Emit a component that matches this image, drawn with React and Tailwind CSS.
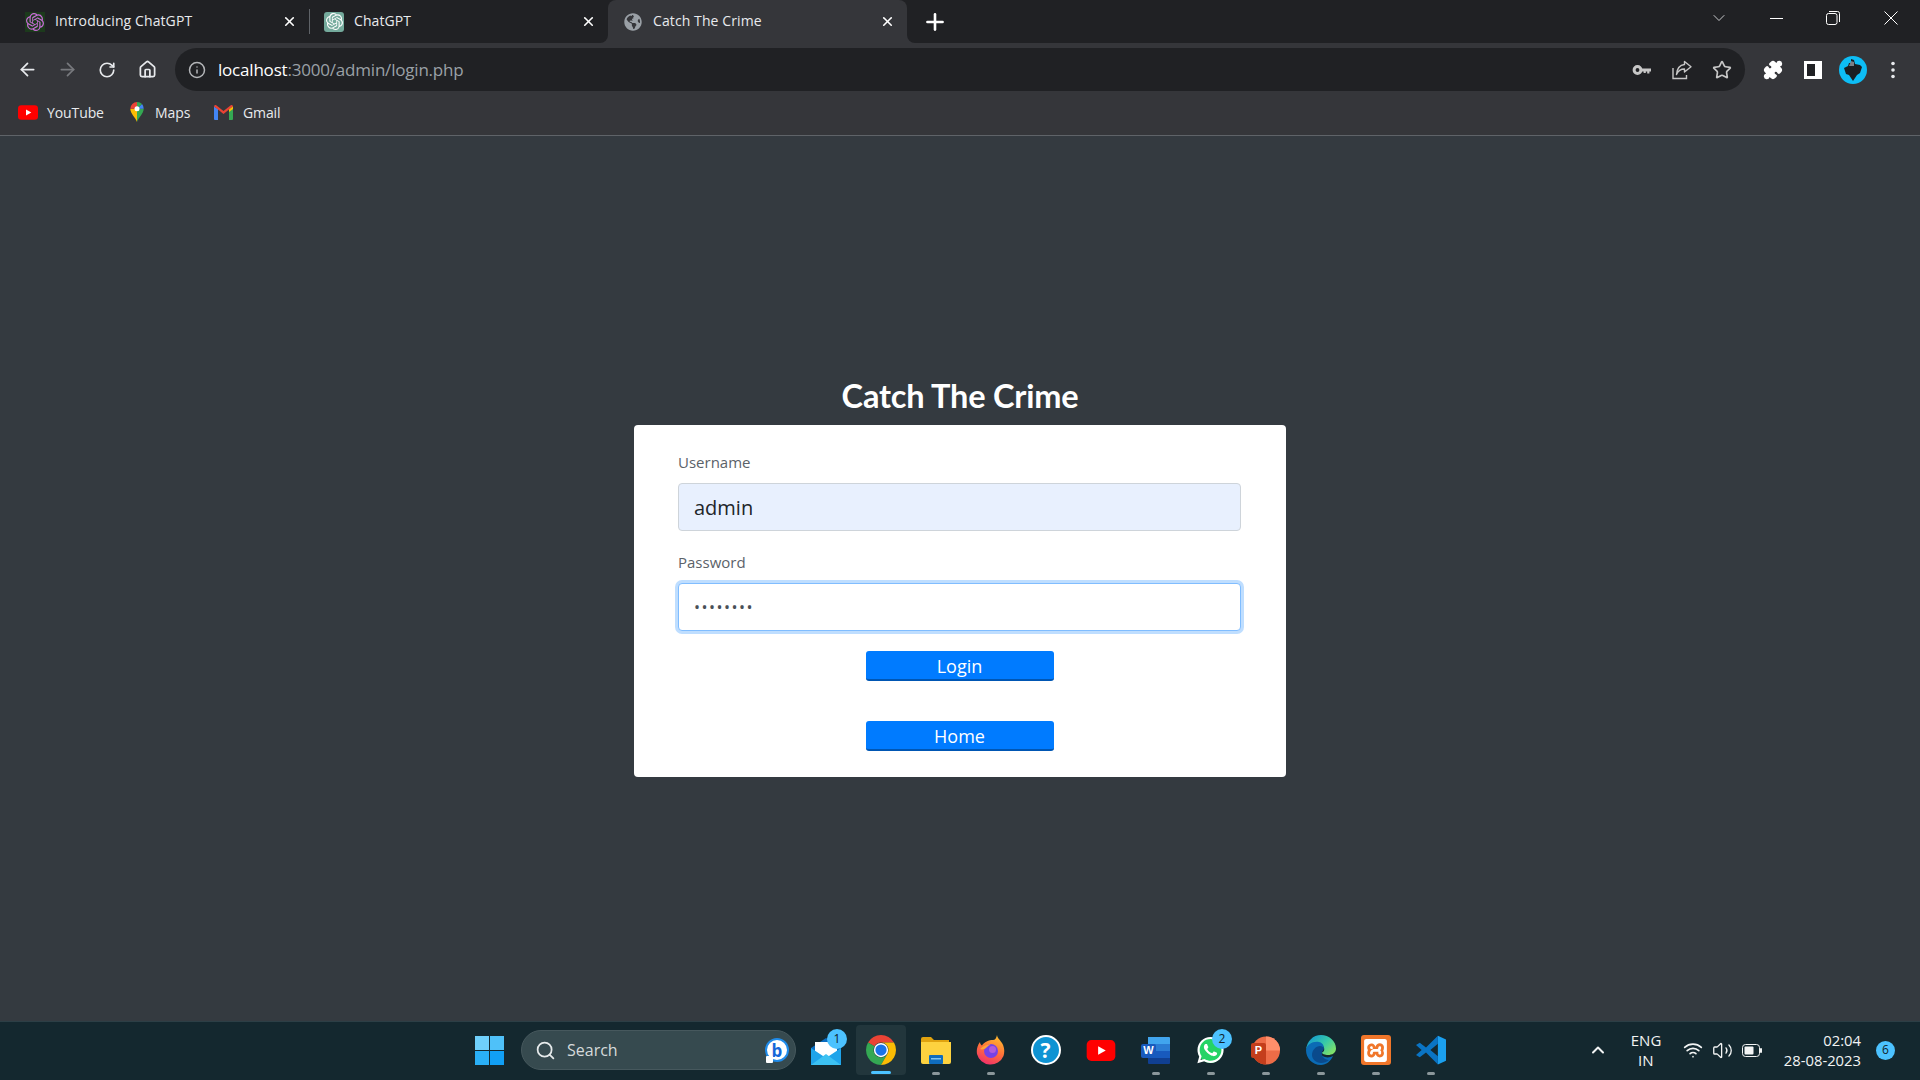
import React from 'react';
import { ArrowLeft, ArrowRight, RotateCw, Home, Info, Star, X, Plus, ChevronDown, ChevronUp, Search, Wifi, Volume2, Puzzle } from 'lucide-react';
import { SiOpenai, SiXampp } from 'react-icons/si';
import { FaGlobeAmericas, FaWhatsapp } from 'react-icons/fa';

const Tab = ({ className, icon, label, active }) => (
  <div className={`relative flex h-[43px] items-center ${className} ${active ? 'rounded-t-lg bg-[#35363a]' : ''}`}>
    {icon}
    <span className="mb-[2px] flex-1 text-[14px] tracking-[0.1px] text-[#e8eaed]">{label}</span>
    <X size={15} strokeWidth={2.6} color="#ffffff" className="mr-[12px]" />
    {active && (
      <>
        <div className="absolute bottom-0 left-[-8px] h-2 w-2 bg-[#35363a]"><div className="h-full w-full rounded-br-lg bg-[#202124]" /></div>
        <div className="absolute bottom-0 right-[-8px] h-2 w-2 bg-[#35363a]"><div className="h-full w-full rounded-bl-lg bg-[#202124]" /></div>
      </>
    )}
  </div>
);

const NavBtn = ({ children }) => <div className="flex h-[40px] w-[40px] items-center justify-center">{children}</div>;

const KeyIcon = () => (
  <svg width="20" height="20" viewBox="0 0 20 20"><circle cx="5.500" cy="10" r="3.400" fill="none" stroke="#c7c7c7" strokeWidth="3" /><path d="M8.500 8.400H19v3h-1.600v2h-2.200v-2h-1.400v1.500h-2.200v-1.500H8.500z" fill="#c7c7c7" /></svg>
);
const ShareIcon = () => (
  <svg width="20" height="20" viewBox="0 0 20 20" fill="none" stroke="#c7c7c7" strokeWidth="1.400"><path d="M1 8v10.500h13.500v-3.500" /><path d="M12.500 1.500 19 6.800l-6.500 5.200V9C8 9 6 11 4.500 14.500 5 8.500 8 5 12.500 4.500z" strokeLinejoin="round" /></svg>
);
const PanelIcon = () => (
  <svg width="18" height="18" viewBox="0 0 18 18"><rect width="18" height="18" fill="#ffffff" /><rect x="3" y="3" width="8" height="12" fill="#202124" /></svg>
);
const Avatar = () => (
  <svg width="28" height="28" viewBox="0 0 28 28"><circle cx="14" cy="14" r="14" fill="#0dbdf5" /><path d="M12 3l3 1 1 4 5 1 2 2-2 6-3 2-4 6-4-6-3-1-2-6 4-2 1-3 2 0z" fill="#1a1d20" /><path d="M12 5l3 1v4h-5z" fill="#7a7f85" /></svg>
);
const Dots = () => (
  <svg width="6" height="18" viewBox="0 0 6 18" fill="#e8eaed"><circle cx="3" cy="2.500" r="1.800" /><circle cx="3" cy="9" r="1.800" /><circle cx="3" cy="15.500" r="1.800" /></svg>
);

const YtIcon = ({ w = 20, h = 15 }) => (
  <svg width={w} height={h} viewBox="0 0 30 22"><rect width="30" height="22" rx="5" fill="#ff0000" /><path d="M12 6.500v9l8-4.500z" fill="#ffffff" /></svg>
);
const MapsIcon = () => (
  <svg width="14" height="20" viewBox="0 0 16 24"><path d="M8 24C6 18 0 14 0 8h8z" fill="#fbbc04" /><path d="M8 24c2-6 8-10 8-16H8z" fill="#34a853" /><path d="M14 2.500A8 8 0 0 1 16 8H8z" fill="#4285f4" /><path d="M8 0a8 8 0 0 1 6 2.500L8 8z" fill="#34a853" /><path d="M8 0a8 8 0 0 0-8 8h8z" fill="#ea4335" /><circle cx="8" cy="8" r="3" fill="#ffffff" /></svg>
);
const GmailIcon = () => (
  <svg width="19" height="15" viewBox="0 0 19 15"><path d="M0 1.500 4 4v11H1a1 1 0 0 1-1-1z" fill="#4285f4" /><path d="M19 1.500 15 4v11h3a1 1 0 0 0 1-1z" fill="#34a853" /><path d="M0 1.500C0 .3 1.300-.4 2.200.2L9.500 6 16.800.2c.9-.6 2.200.1 2.200 1.300L15 4.500 9.500 9 4 4.500z" fill="#ea4335" /><path d="M15 4.500 19 1.500V4l-4 3z" fill="#fbbc04" /></svg>
);

const WinLogo = () => (
  <div className="grid h-[29px] w-[29px] grid-cols-2 gap-[1px]">
    <div className="bg-[#6fd0fb]" /><div className="bg-[#4fc1f9]" /><div className="bg-[#2ab0f7]" /><div className="bg-[#119ff5]" />
  </div>
);
const BingIcon = () => (
  <div className="relative flex h-[24px] w-[24px] items-center justify-center rounded-full border-2 border-[#1f8be8] bg-white">
    <span className="text-[17px] font-bold leading-none text-[#1467d9]">b</span>
    <div className="absolute bottom-[-3px] left-[-1px] h-[7px] w-[7px] rounded-[1px] bg-white" />
  </div>
);
const MailIcon = () => (
  <svg width="30" height="30" viewBox="0 0 30 30"><path d="M0 13 15 3l15 10v16H0z" fill="#0a6cc0" /><path d="M4 7h22v13L15 26 4 20z" fill="#ffffff" /><path d="M0 13l15 10 15-10v17H0z" fill="#1fa4ea" /><path d="M0 30 15 19l15 11z" fill="#3cc1f2" /></svg>
);
const ChromeIcon = () => (
  <svg width="30" height="30" viewBox="4 4 40 40">
    <path d="M41.320 14A20 20 0 0 0 6.680 14l8.660 5A10 10 0 0 1 24 14z" fill="#ea4335" />
    <path d="M6.680 14A20 20 0 0 0 24 44l8.660-15A10 10 0 0 1 15.340 19z" fill="#34a853" />
    <path d="M41.320 14A20 20 0 0 1 24 44l8.660-15A10 10 0 0 0 24 14z" fill="#fbbc04" />
    <circle cx="24" cy="24" r="9.500" fill="#ffffff" /><circle cx="24" cy="24" r="7.500" fill="#1a73e8" />
  </svg>
);
const FolderIcon = () => (
  <svg width="30" height="28" viewBox="0 0 30 28"><path d="M0 3a2 2 0 0 1 2-2h8l3 3h15v6H0z" fill="#e0a30f" /><path d="M0 6h30v20a2 2 0 0 1-2 2H2a2 2 0 0 1-2-2z" fill="#fdd23f" /><rect x="8" y="19" width="14" height="9" rx="1" fill="#0f6cbd" /><rect x="10" y="22" width="10" height="1.500" fill="#7fc3f2" /></svg>
);
const FirefoxIcon = () => (
  <svg width="30" height="30" viewBox="0 0 30 30">
    <defs><linearGradient id="ff" x1="0.700" y1="0" x2="0.300" y2="1"><stop offset="0" stopColor="#ffbd2e" /><stop offset="0.500" stopColor="#ff7139" /><stop offset="1" stopColor="#f02e6b" /></linearGradient></defs>
    <path d="M21 0c.3 3 2.500 4 5 8 3 5 2.500 10 1.500 13A14 14 0 0 1 1 19C.4 15 1 11 4 7c0 2 1 3 2 3.500C8 7 13 5 17 5c2 0 3.500-2 4-5z" fill="url(#ff)" />
    <circle cx="15" cy="16" r="7" fill="#7542e5" /><circle cx="16.500" cy="14.500" r="3.500" fill="#b05bdb" />
    <path d="M4 14c3-3 6-4 11-5 0 0-3 2-5 4-1 1-4 2-6 1z" fill="#ffa436" />
  </svg>
);
const HelpIcon = () => (
  <div className="flex h-[30px] w-[30px] items-center justify-center rounded-full border-2 border-white bg-[#0e93d3] font-['Open_Sans'] text-[21px] font-bold leading-none text-white">?</div>
);
const WordIcon = () => (
  <div className="relative h-[27px] w-[29px]">
    <svg width="29" height="27" viewBox="0 0 29 27"><path d="M7 0h21a1 1 0 0 1 1 1v6H7z" fill="#41a5ee" /><rect x="7" y="7" width="22" height="7" fill="#2b7cd3" /><rect x="7" y="14" width="22" height="7" fill="#185abd" /><path d="M7 21h22v5a1 1 0 0 1-1 1H8a1 1 0 0 1-1-1z" fill="#103f91" /></svg>
    <div className="absolute left-0 top-[7px] flex h-[14px] w-[15px] items-center justify-center rounded-[2px] bg-[#185abd] font-['Liberation_Sans'] text-[11px] font-bold leading-none text-white">W</div>
  </div>
);
const WaIcon = () => (
  <div className="relative flex h-[29px] w-[29px] items-center justify-center">
    <div className="absolute inset-[2px] rounded-full bg-[#25d366]" />
    <FaWhatsapp size={30} color="#ffffff" className="relative" />
  </div>
);
const PptIcon = () => (
  <div className="relative h-[29px] w-[29px]">
    <svg width="29" height="29" viewBox="0 0 29 29"><circle cx="15" cy="14.500" r="14" fill="#ed6c47" /><path d="M15 .500A14 14 0 0 1 29 14.500H15z" fill="#ff8f6b" /><path d="M15 28.500A14 14 0 0 1 1 14.500h14z" fill="#c43e1c" /></svg>
    <div className="absolute left-0 top-[7px] flex h-[15px] w-[15px] items-center justify-center rounded-[2px] bg-[#c43e1c] font-['Liberation_Sans'] text-[11px] font-bold leading-none text-white">P</div>
  </div>
);
const EdgeIcon = () => (
  <svg width="30" height="30" viewBox="0 0 30 30">
    <defs>
      <linearGradient id="eg" x1="0" y1="0" x2="1" y2="0.700"><stop offset="0" stopColor="#0c8fdb" /><stop offset="0.600" stopColor="#37c9a8" /><stop offset="1" stopColor="#7fe06a" /></linearGradient>
    </defs>
    <path d="M15 0c8 0 15 6 15 13.500 0 4.500-4 6.500-8 6.500-3 0-6-1-6-2.500 3-1 3-5 0-7.500C10 6 2 9 0 15 1 6 7 0 15 0z" fill="url(#eg)" />
    <path d="M0 15c1-6 7-9 13-8 5 1 6 6 3 9-2 2-1 5 3 6 3 1 6 0 8-1-2 5-7 9-12 9C6 30 0 23 0 15z" fill="#0b6bb5" />
    <path d="M6 20c0-5 4-9 8-9 2 0 4 1.500 4 3-2 2-3 5-1 8 1 2 4 3 6 3-2 2-5 3-8 3-5 0-9-4-9-8z" fill="#0a4a8c" />
  </svg>
);
const XamppIcon = () => (
  <div className="flex h-[30px] w-[30px] items-center justify-center rounded-[3px] bg-[#f0762a]"><SiXampp size={23} color="#ffffff" /></div>
);
const VsIcon = () => (
  <svg width="30" height="30" viewBox="0 0 24 24"><path fill="#1ba0ef" d="M17.500 0.500 24 3.500v17l-6.500 3z" /><path fill="#0a74c4" d="M17.500 0.500 8 10 3 6.200 0 8l4.500 4L0 16l3 1.800L8 14l9.500 9.500V17L11.500 12l6-5z" /></svg>
);

const Badge = ({ n }) => (
  <div className="absolute right-[6px] top-[4px] flex h-[20px] w-[20px] items-center justify-center rounded-full bg-[#4cc2ff] font-['Open_Sans'] text-[12px] leading-none text-[#10222a]">{n}</div>
);

const TaskItem = ({ children, dot, badge, active }) => (
  <div className="relative flex h-[50px] w-[55px] items-center justify-center">
    {active && <div className="absolute inset-y-0 left-[2.500px] right-[2.500px] rounded-[4px] bg-[#22363c]" />}
    <div className="relative flex items-center justify-center">{children}</div>
    {badge && <Badge n={badge} />}
    {dot && <div className="absolute bottom-0 left-1/2 h-[3px] w-[8px] -translate-x-1/2 rounded-full bg-[#8b979b]" />}
    {active && <div className="absolute bottom-[1px] left-1/2 h-[3px] w-[20px] -translate-x-1/2 rounded-full bg-[#4cc2ff]" />}
  </div>
);

export default function App() {
  return (
    <div className="flex h-[1080px] w-[1920px] flex-col overflow-hidden bg-[#343a40] font-['Open_Sans',sans-serif]">
      {/* tab strip */}
      <div className="flex h-[43px] shrink-0 items-center bg-[#202124] pr-[8px]">
        <Tab className="w-[309px] pl-[25px]" label="Introducing ChatGPT" icon={
          <div className="mr-[10px] flex h-[20px] w-[20px] items-center justify-center bg-[#1c3a1c]"><SiOpenai size={18} color="#c86dd7" /></div>
        } />
        <div className="h-[25px] w-px bg-[#5f6368]" />
        <Tab className="w-[298px] pl-[14px]" label="ChatGPT" icon={
          <div className="mr-[10px] flex h-[20px] w-[20px] items-center justify-center rounded-[3px] bg-[#74aa9c]"><SiOpenai size={17} color="#ffffff" /></div>
        } />
        <Tab active className="w-[299px] pl-[16px]" label="Catch The Crime" icon={
          <FaGlobeAmericas size={18} color="#9aa0a6" className="mr-[11px]" />
        } />
        <div className="ml-[20px] flex w-[16px] items-center justify-center"><Plus size={26} strokeWidth={2.400} color="#ffffff" className="shrink-0" /></div>
        <div className="flex-1" />
        <ChevronDown size={20} strokeWidth={1} color="#e8eaed" className="mr-[41px] mb-[7px]" />
        <div className="mr-[43px] mb-[7px] h-px w-[13px] bg-white" />
        <svg width="14" height="14" viewBox="0 0 14 14" fill="none" stroke="#ffffff" className="mr-[44px] mb-[7px]"><rect x="0.500" y="2.500" width="10.500" height="11" rx="2" /><path d="M3 .500h8.500a2 2 0 0 1 2 2V11" /></svg>
        <svg width="14" height="14" viewBox="0 0 14 14" fill="none" stroke="#ffffff" className="mr-[14px] mb-[7px]"><path d="M.500.500l13 13M13.500.500l-13 13" /></svg>
      </div>

      {/* toolbar */}
      <div className="shrink-0 border-b border-[#5f6368] bg-[#35363a] pt-[5px]">
        <div className="flex h-[43px] items-center pl-[7px] pr-[7px]">
          <NavBtn><ArrowLeft size={21} strokeWidth={2} color="#e8eaed" /></NavBtn>
          <NavBtn><ArrowRight size={21} strokeWidth={2} color="#77797d" /></NavBtn>
          <NavBtn><RotateCw size={18} strokeWidth={2.200} color="#e8eaed" /></NavBtn>
          <NavBtn><Home size={19} strokeWidth={2.200} color="#e8eaed" /></NavBtn>
          <div className="ml-[8px] flex h-[43px] w-[1570px] items-center rounded-full bg-[#202124] pl-[13px] pr-[3px]">
            <Info size={18} strokeWidth={2} color="#b4b6b9" />
            <div className="ml-[12px] flex-1 text-[17px] tracking-[-0.2px] text-[#9aa0a6]"><span className="text-white">localhost</span>:3000/admin/login.php</div>
            <NavBtn><KeyIcon /></NavBtn>
            <NavBtn><ShareIcon /></NavBtn>
            <NavBtn><Star size={20} strokeWidth={2} color="#c7c7c7" /></NavBtn>
          </div>
          <div className="ml-[8px] flex">
            <NavBtn><Puzzle size={20} strokeWidth={2} color="#ffffff" fill="#ffffff" /></NavBtn>
            <NavBtn><PanelIcon /></NavBtn>
            <NavBtn><Avatar /></NavBtn>
            <NavBtn><Dots /></NavBtn>
          </div>
        </div>
        <div className="flex h-[44px] items-center pb-[2px] pl-[18px] text-[14px] tracking-[-0.1px] text-[#e8eaed]">
          <YtIcon /><span className="ml-[9px] w-[63px]">YouTube</span>
          <span className="ml-[17px] flex w-[19px] justify-center"><MapsIcon /></span><span className="ml-[9px] w-[38px]">Maps</span>
          <span className="ml-[21px] flex w-[19px]"><GmailIcon /></span><span className="ml-[10px]">Gmail</span>
        </div>
      </div>

      {/* page */}
      <main className="flex flex-1 flex-col items-center pt-[240px]">
        <h1 className="mb-[9px] h-[40px] font-['Lato'] text-[32.500px] font-bold leading-[40px] tracking-[-0.2px] text-white">Catch The Crime</h1>
        <div className="flex w-[652px] flex-col rounded-[4px] bg-white pb-[26px] pl-[44px] pr-[45px] pt-[25px]">
          <label className="mb-[9px] h-[24px] text-[15px] leading-[24px] text-[#5b6269]">Username</label>
          <input readOnly value="admin" className="mb-[19px] h-[48px] rounded-[4px] border border-[#ced4da] bg-[#e8f0fe] px-[15px] text-[20px] text-[#212529] outline-none" />
          <label className="mb-[9px] h-[24px] text-[15px] leading-[24px] text-[#5b6269]">Password</label>
          <input readOnly type="password" value="password" className="h-[48px] rounded-[4px] border border-[#80bdff] bg-white px-[15px] text-[16px] tracking-[1.500px] text-[#495057] shadow-[0_0_0_3px_#bfdeff] outline-none" />
          <button className="ml-[187.500px] mt-[20px] h-[30px] w-[188px] rounded-[3px] border-b-2 border-[#0056b3] bg-[#007bff] pt-[2px] text-[18px] leading-none text-white">Login</button>
          <button className="ml-[187.500px] mt-[40px] h-[30px] w-[188px] rounded-[3px] border-b-2 border-[#0056b3] bg-[#007bff] pt-[2px] text-[18px] leading-none text-white">Home</button>
        </div>
      </main>

      {/* taskbar */}
      <div className="grid h-[59px] shrink-0 grid-cols-[1fr_auto_1fr] items-center border-t border-[#2c3f46] bg-[#14282f] pb-[2px]">
        <div />
        <div className="flex items-center">
          <div className="flex w-[55px] justify-center"><WinLogo /></div>
          <div className="ml-[4px] mr-[2px] flex h-[40px] w-[275px] items-center rounded-full border border-[#46585d] bg-[#364a4f] pl-[13px] pr-[6px]">
            <Search size={21} strokeWidth={2} color="#e6eaeb" />
            <span className="ml-[11px] flex-1 text-[16px] text-[#d5dadb]">Search</span>
            <BingIcon />
          </div>
          <TaskItem badge="1"><MailIcon /></TaskItem>
          <TaskItem active><ChromeIcon /></TaskItem>
          <TaskItem dot><FolderIcon /></TaskItem>
          <TaskItem dot><FirefoxIcon /></TaskItem>
          <TaskItem><HelpIcon /></TaskItem>
          <TaskItem><YtIcon w={30} h={21} /></TaskItem>
          <TaskItem dot><WordIcon /></TaskItem>
          <TaskItem dot badge="2"><WaIcon /></TaskItem>
          <TaskItem dot><PptIcon /></TaskItem>
          <TaskItem dot><EdgeIcon /></TaskItem>
          <TaskItem dot><XamppIcon /></TaskItem>
          <TaskItem dot><VsIcon /></TaskItem>
        </div>
        <div className="flex items-center justify-end pr-[25px] text-[15px] text-[#f2f4f4]">
          <ChevronUp size={20} strokeWidth={2.400} color="#f2f4f4" className="mr-[23px]" />
          <div className="mr-[22px] w-[30px] text-center leading-[20px]">ENG<br />IN</div>
          <Wifi size={20} strokeWidth={2} color="#f2f4f4" className="mr-[9px]" />
          <Volume2 size={21} strokeWidth={1.500} color="#f2f4f4" className="mr-[9px]" />
          <svg width="20" height="13" viewBox="0 0 20 13" className="mr-[22px]"><rect x="0.500" y="0.500" width="17" height="12" rx="3" fill="none" stroke="#f2f4f4" /><rect x="2.500" y="2.500" width="9" height="8" rx="1" fill="#f2f4f4" /><rect x="18" y="4" width="2" height="5" rx="1" fill="#f2f4f4" /></svg>
          <div className="mr-[15px] text-right text-[14.800px] leading-[20px]">02:04<br />28-08-2023</div>
          <div className="flex h-[19px] w-[19px] items-center justify-center rounded-full bg-[#4cc2ff] text-[12px] leading-none text-[#10222a]">6</div>
        </div>
      </div>
    </div>
  );
}
